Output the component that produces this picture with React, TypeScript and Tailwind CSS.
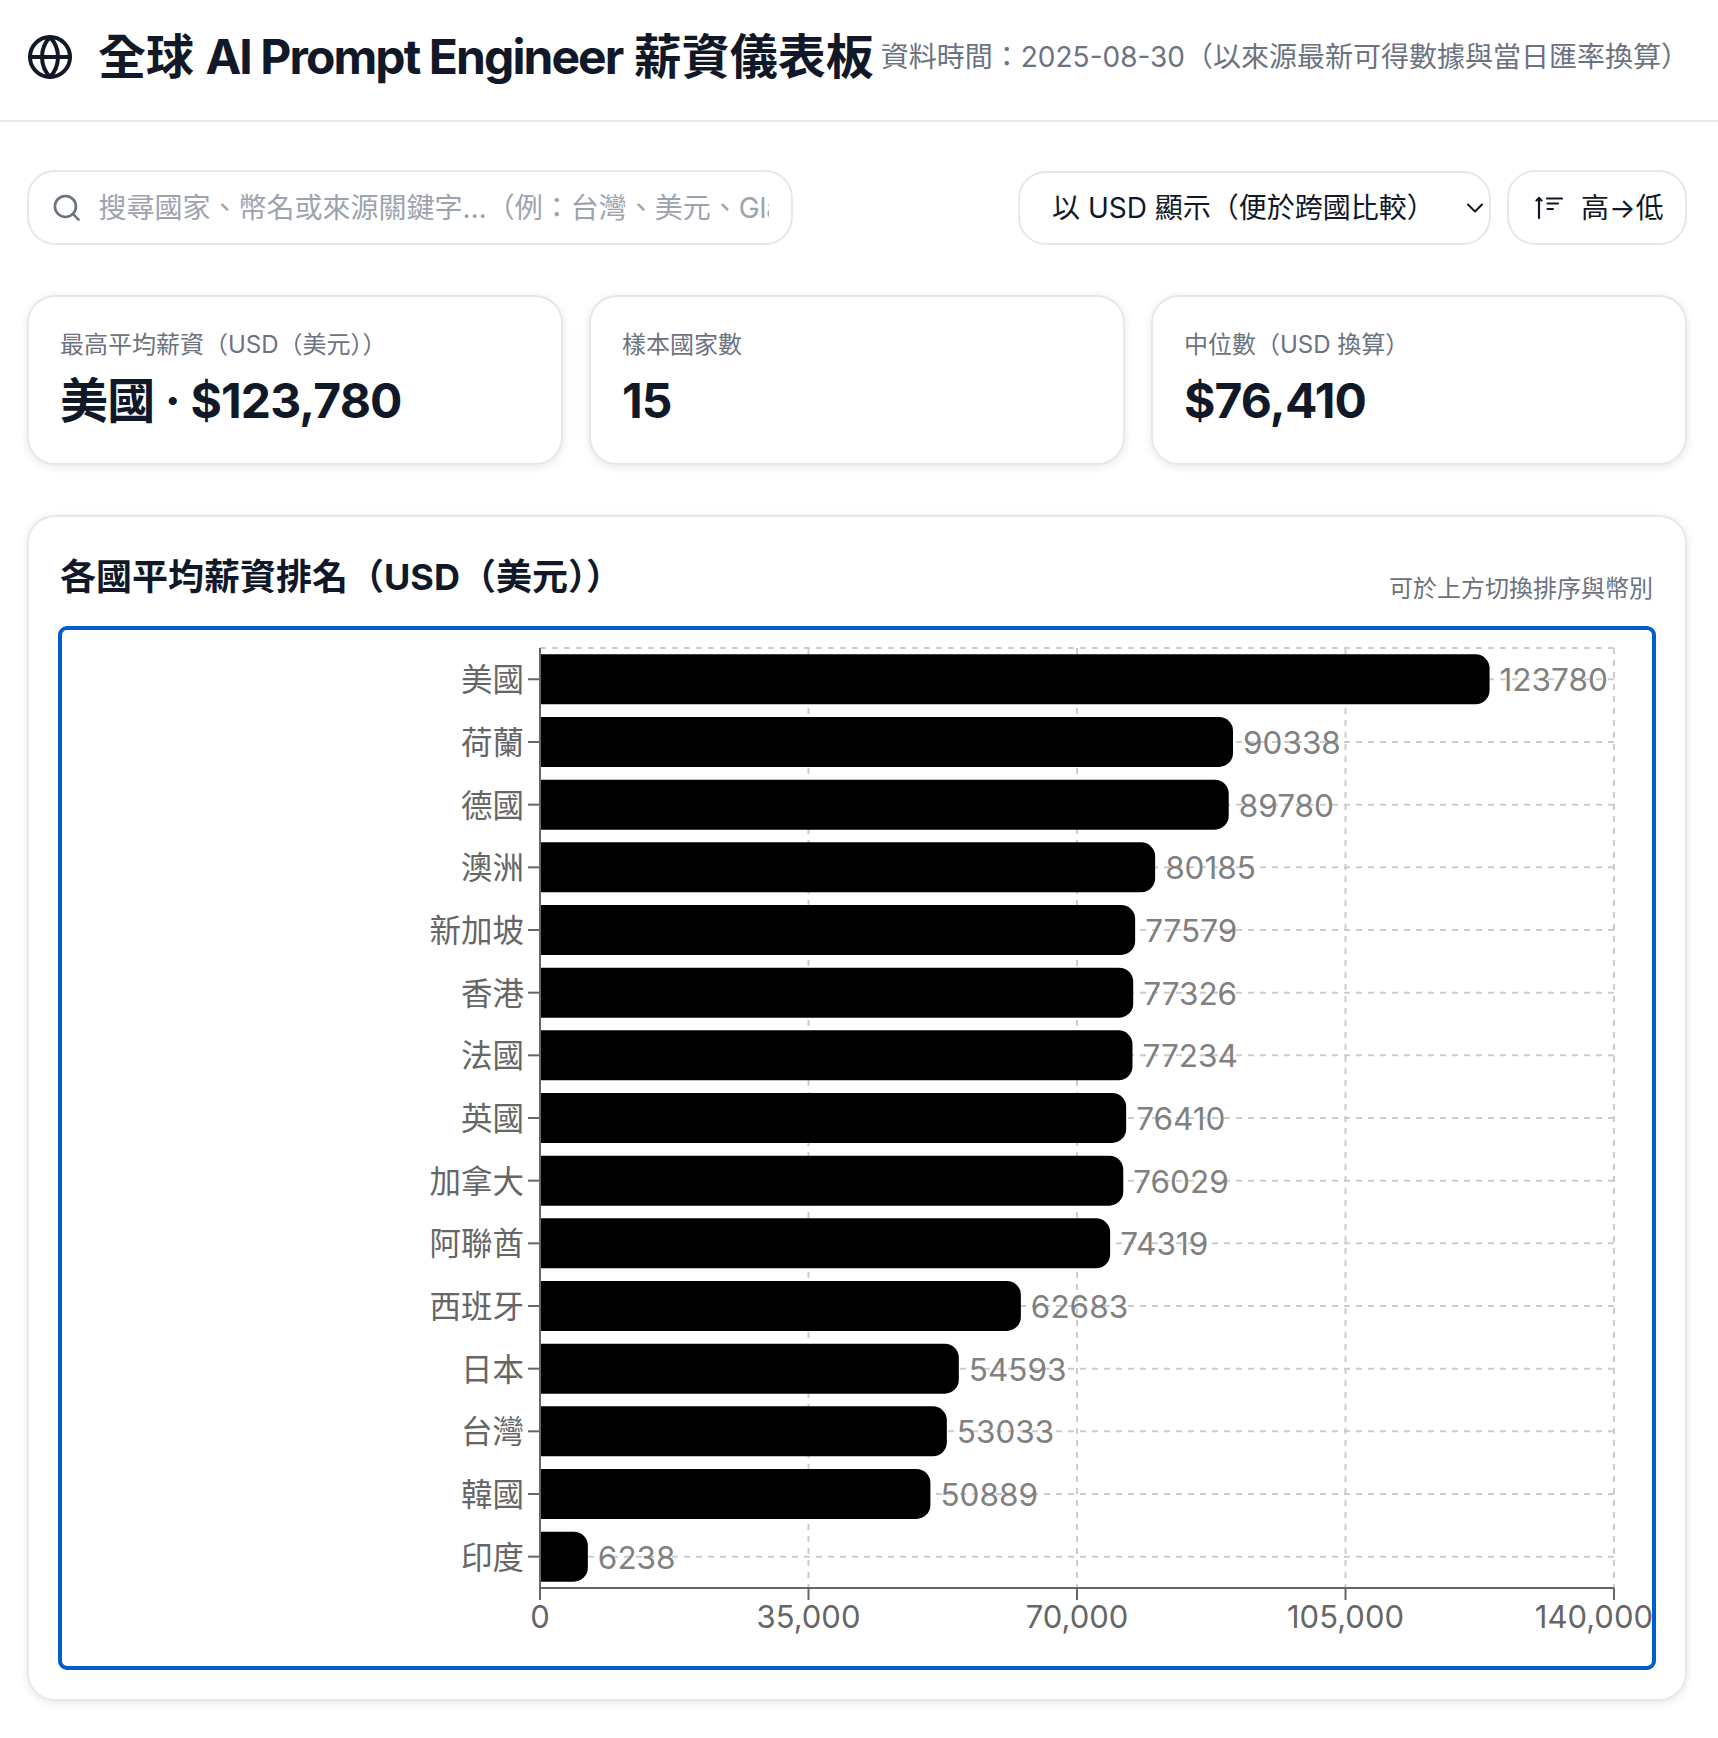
import { ChevronDown, Globe, Search } from "lucide-react";

const salaries: [string, number][] = [
    ["美國", 123780],
    ["荷蘭", 90338],
    ["德國", 89780],
    ["澳洲", 80185],
    ["新加坡", 77579],
    ["香港", 77326],
    ["法國", 77234],
    ["英國", 76410],
    ["加拿大", 76029],
    ["阿聯酋", 74319],
    ["西班牙", 62683],
    ["日本", 54593],
    ["台灣", 53033],
    ["韓國", 50889],
    ["印度", 6238],
];

const stats = [
    { label: "最高平均薪資（USD（美元））", value: "美國 · $123,780" },
    { label: "樣本國家數", value: "15" },
    { label: "中位數（USD 換算）", value: "$76,410" },
];

const plotLeft = 479;
const plotRight = 1553;
const plotTop = 19;
const plotBottom = 959;
const band = (plotBottom - plotTop) / salaries.length;
const xMax = 140000;
const xTicks = [0, 35000, 70000, 105000, 140000];

function xPos(value: number) {
    return plotLeft + (value / xMax) * (plotRight - plotLeft);
}

function barPath(x: number, y: number, w: number, h: number, r: number) {
    return `M${x},${y} h${w - r} a${r},${r} 0 0 1 ${r},${r} v${h - 2 * r} a${r},${r} 0 0 1 ${-r},${r} h${-(w - r)} Z`;
}

function SortIcon() {
    return (
        <svg width="28" height="26" viewBox="0 0 28 26" fill="none" stroke="currentColor" strokeWidth="2.2" strokeLinecap="round" strokeLinejoin="round" className="shrink-0">
            <path d="M4 3v20" />
            <path d="M1.5 5.5 4 3l2.5 2.5" />
            <path d="M12 3.5h15" />
            <path d="M12.5 8.5h10.5" />
            <path d="M12.5 14h5.5" />
        </svg>
    );
}

function SalaryChart() {
    return (
        <svg width="1592" height="1038" viewBox="0 0 1592 1038" className="block rounded-[6px] outline-[4px] outline-offset-[-1px] outline-[#005fcc]">
            <g stroke="#cccccc" strokeWidth="2" strokeDasharray="6 6" fill="none">
                <line x1={plotLeft} y1={plotTop} x2={plotRight} y2={plotTop} />
                {salaries.map((_, i) => {
                    const y = plotTop + band * (i + 0.5);
                    return <line key={i} x1={plotLeft} y1={y} x2={plotRight} y2={y} />;
                })}
                {xTicks.slice(1).map(t => (
                    <line key={t} x1={xPos(t)} y1={plotTop} x2={xPos(t)} y2={plotBottom} />
                ))}
            </g>
            {salaries.map(([name, value], i) => {
                const y = plotTop + band * i + 6.3;
                const cy = plotTop + band * (i + 0.5);
                const w = xPos(value) - plotLeft;
                return (
                    <g key={name}>
                        <path d={barPath(plotLeft, y, w, 50, 14)} fill="#000000" />
                        <text x={plotLeft + w + 10} y={cy + 12} fontSize="31.5" fill="#808080">{value}</text>
                        <line x1={plotLeft - 12} y1={cy} x2={plotLeft} y2={cy} stroke="#666666" strokeWidth="2" />
                        <text x={plotLeft - 16} y={cy + 12} fontSize="31.5" fill="#666666" textAnchor="end">{name}</text>
                    </g>
                );
            })}
            <line x1={plotLeft} y1={plotTop} x2={plotLeft} y2={plotBottom} stroke="#666666" strokeWidth="2" />
            <line x1={plotLeft} y1={plotBottom} x2={plotRight} y2={plotBottom} stroke="#666666" strokeWidth="2" />
            {xTicks.map(t => (
                <g key={t}>
                    <line x1={xPos(t)} y1={plotBottom} x2={xPos(t)} y2={plotBottom + 12} stroke="#666666" strokeWidth="2" />
                    <text
                        x={t === xMax ? 1592 : xPos(t)}
                        y={plotBottom + 40}
                        fontSize="31"
                        fill="#666666"
                        textAnchor={t === xMax ? "end" : "middle"}
                    >
                        {t.toLocaleString("en-US")}
                    </text>
                </g>
            ))}
        </svg>
    );
}

export default function App() {
    return (
        <div className="min-h-[1738px] bg-white text-[#111827] font-['Inter','Noto_Sans_CJK_TC',sans-serif]">
            <header className="h-[122px] flex items-center gap-[7px] border-b-2 border-[#e5e7eb] pl-[26px] pb-[6px]">
                <div className="flex items-center gap-[24px]">
                    <Globe className="w-12 h-12" strokeWidth={2} />
                    <h1 className="text-[48px] leading-[60px] font-bold whitespace-nowrap">
                        全球 <span className="tracking-[-0.04em]">AI Prompt Engineer</span> 薪資儀表板
                    </h1>
                </div>
                <p className="text-[28px] leading-[42px] text-[#6b7280] whitespace-nowrap">資料時間：2025-08-30（以來源最新可得數據與當日匯率換算）</p>
            </header>

            <main className="pl-[27px] pr-[31px] pt-[48px]">
                <div className="flex items-center">
                    <div className="w-[766px] h-[75px] flex items-center rounded-[28px] border-2 border-[#e2e8f0] pl-[22px] pr-[22px] gap-[16px]">
                        <Search className="w-[31.5px] h-[31.5px] shrink-0 text-[#6b7280]" strokeWidth={2} />
                        <input
                            className="w-full min-w-0 pt-[1px] text-[28px] outline-none bg-transparent placeholder:text-[#9ca3af]"
                            placeholder="搜尋國家、幣名或來源關鍵字…（例：台灣、美元、Glassdoor）"
                        />
                    </div>
                    <div className="ml-auto w-[473px] h-[74px] flex items-center justify-between rounded-[28px] border-2 border-[#e2e8f0] pl-[32px] pt-[1px] text-[28px]">
                        <span className="whitespace-nowrap">以 USD 顯示（便於跨國比較）</span>
                        <ChevronDown className="w-7 h-7 shrink-0" strokeWidth={1.75} />
                    </div>
                    <button className="ml-[16px] w-[180px] h-[75px] flex items-center gap-[18px] rounded-[28px] border-2 border-[#e2e8f0] pl-[26px] text-[28px]">
                        <SortIcon />
                        <span className="whitespace-nowrap">高→低</span>
                    </button>
                </div>

                <div className="grid grid-cols-3 gap-[26px] mt-[50px]">
                    {stats.map(stat => (
                        <div key={stat.label} className="h-[170px] rounded-[28px] border-2 border-[#e2e8f0] shadow-[0_2px_8px_rgba(15,23,42,0.1)] pl-[31px] pr-8 pt-[30px]">
                            <p className="text-[24px] leading-[36px] text-[#6b7280]">{stat.label}</p>
                            <p className="mt-[7px] text-[48px] leading-[62px] font-bold tracking-[-0.018em]">{stat.value}</p>
                        </div>
                    ))}
                </div>

                <section className="mt-[50px] rounded-[28px] border-2 border-[#e2e8f0] shadow-[0_2px_8px_rgba(15,23,42,0.1)] px-8 pt-8 pb-8">
                    <div className="flex items-end justify-between mb-[24px]">
                        <h2 className="ml-[-1px] text-[36px] leading-[56px] font-bold">各國平均薪資排名（USD（美元））</h2>
                        <span className="text-[24px] leading-[36px] mb-[-2px] text-[#6b7280]">可於上方切換排序與幣別</span>
                    </div>
                    <SalaryChart />
                </section>
            </main>
        </div>
    );
}
